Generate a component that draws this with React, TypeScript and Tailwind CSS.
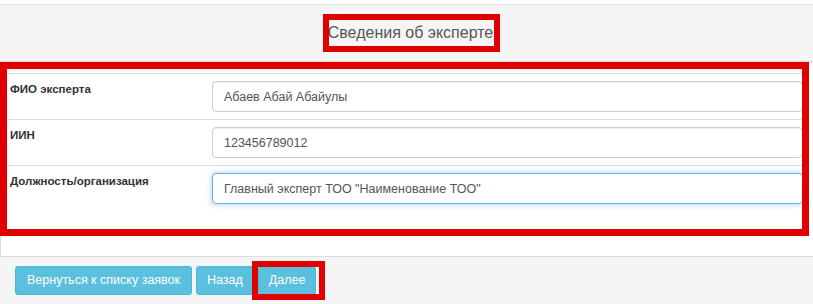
import React from "react";

const fields = [
  { label: "ФИО эксперта", value: "Абаев Абай Абайулы", focused: false },
  { label: "ИИН", value: "123456789012", focused: false },
  {
    label: "Должность/организация",
    value: 'Главный эксперт ТОО "Наименование ТОО"',
    focused: true,
  },
];

function Field({
  label,
  value,
  focused,
}: {
  label: string;
  value: string;
  focused: boolean;
}) {
  return (
    <div className="flex border-t border-[#ddd] pt-[7px] pb-[7px]">
      <label className="w-[207px] shrink-0 pl-[5px] text-[11.5px] font-bold leading-[17px] text-[#333]">
        {label}
      </label>
      <input
        readOnly
        value={value}
        className={
          focused
            ? "h-[31px] flex-1 rounded-[4px] border border-[#66afe9] bg-white px-[11px] text-[12.5px] text-[#555] shadow-[0_0_6px_rgba(102,175,233,0.6)] outline-none"
            : "h-[31px] flex-1 rounded-[4px] border border-[#ccc] bg-white px-[11px] text-[12.5px] text-[#555] shadow-[inset_0_1px_1px_rgba(0,0,0,0.075)] outline-none"
        }
      />
    </div>
  );
}

export default function App() {
  return (
    <div className="relative h-[304px] w-[813px] overflow-hidden bg-white font-['Liberation_Sans',Arial,sans-serif]">
      <section className="mt-[4px] border-t border-[#e3e3e3]">
        <header className="flex h-[57px] items-center justify-center border-b border-[#ddd] bg-[#f5f5f5]">
          <h3 className="pl-[8px] text-[16px] text-[#555]">Сведения об эксперте</h3>
        </header>
        <div className="border-l border-[#ddd] bg-white pt-[11px] pb-[45px] pl-[4px] pr-[10px]">
          {fields.map((f) => (
            <Field key={f.label} {...f} />
          ))}
        </div>
        <footer className="flex h-[48px] gap-[4px] border-t border-[#ddd] bg-[#f5f5f5] pl-[15px] pt-[9px]">
          <button className="h-[29px] rounded-[3px] border border-[#46b8da] bg-[#5bc0de] px-[11px] text-[12.5px] text-white">
            Вернуться к списку заявок
          </button>
          <button className="h-[29px] rounded-[3px] border border-[#46b8da] bg-[#5bc0de] px-[10px] text-[12.5px] text-white">
            Назад
          </button>
          <button className="h-[29px] rounded-[3px] border border-[#46b8da] bg-[#5bc0de] px-[10px] text-[12.5px] text-white">
            Далее
          </button>
        </footer>
      </section>

      {/* annotation boxes */}
      <div className="pointer-events-none absolute left-[323px] top-[14px] h-[38px] w-[177px] border-[6px] border-[#e00000]" />
      <div className="pointer-events-none absolute left-0 top-[62px] h-[174px] w-[809px] border-[7px] border-[#e00000]" />
      <div className="pointer-events-none absolute left-[252px] top-[261px] h-[39px] w-[73px] border-[6px] border-[#e00000]" />
    </div>
  );
}
